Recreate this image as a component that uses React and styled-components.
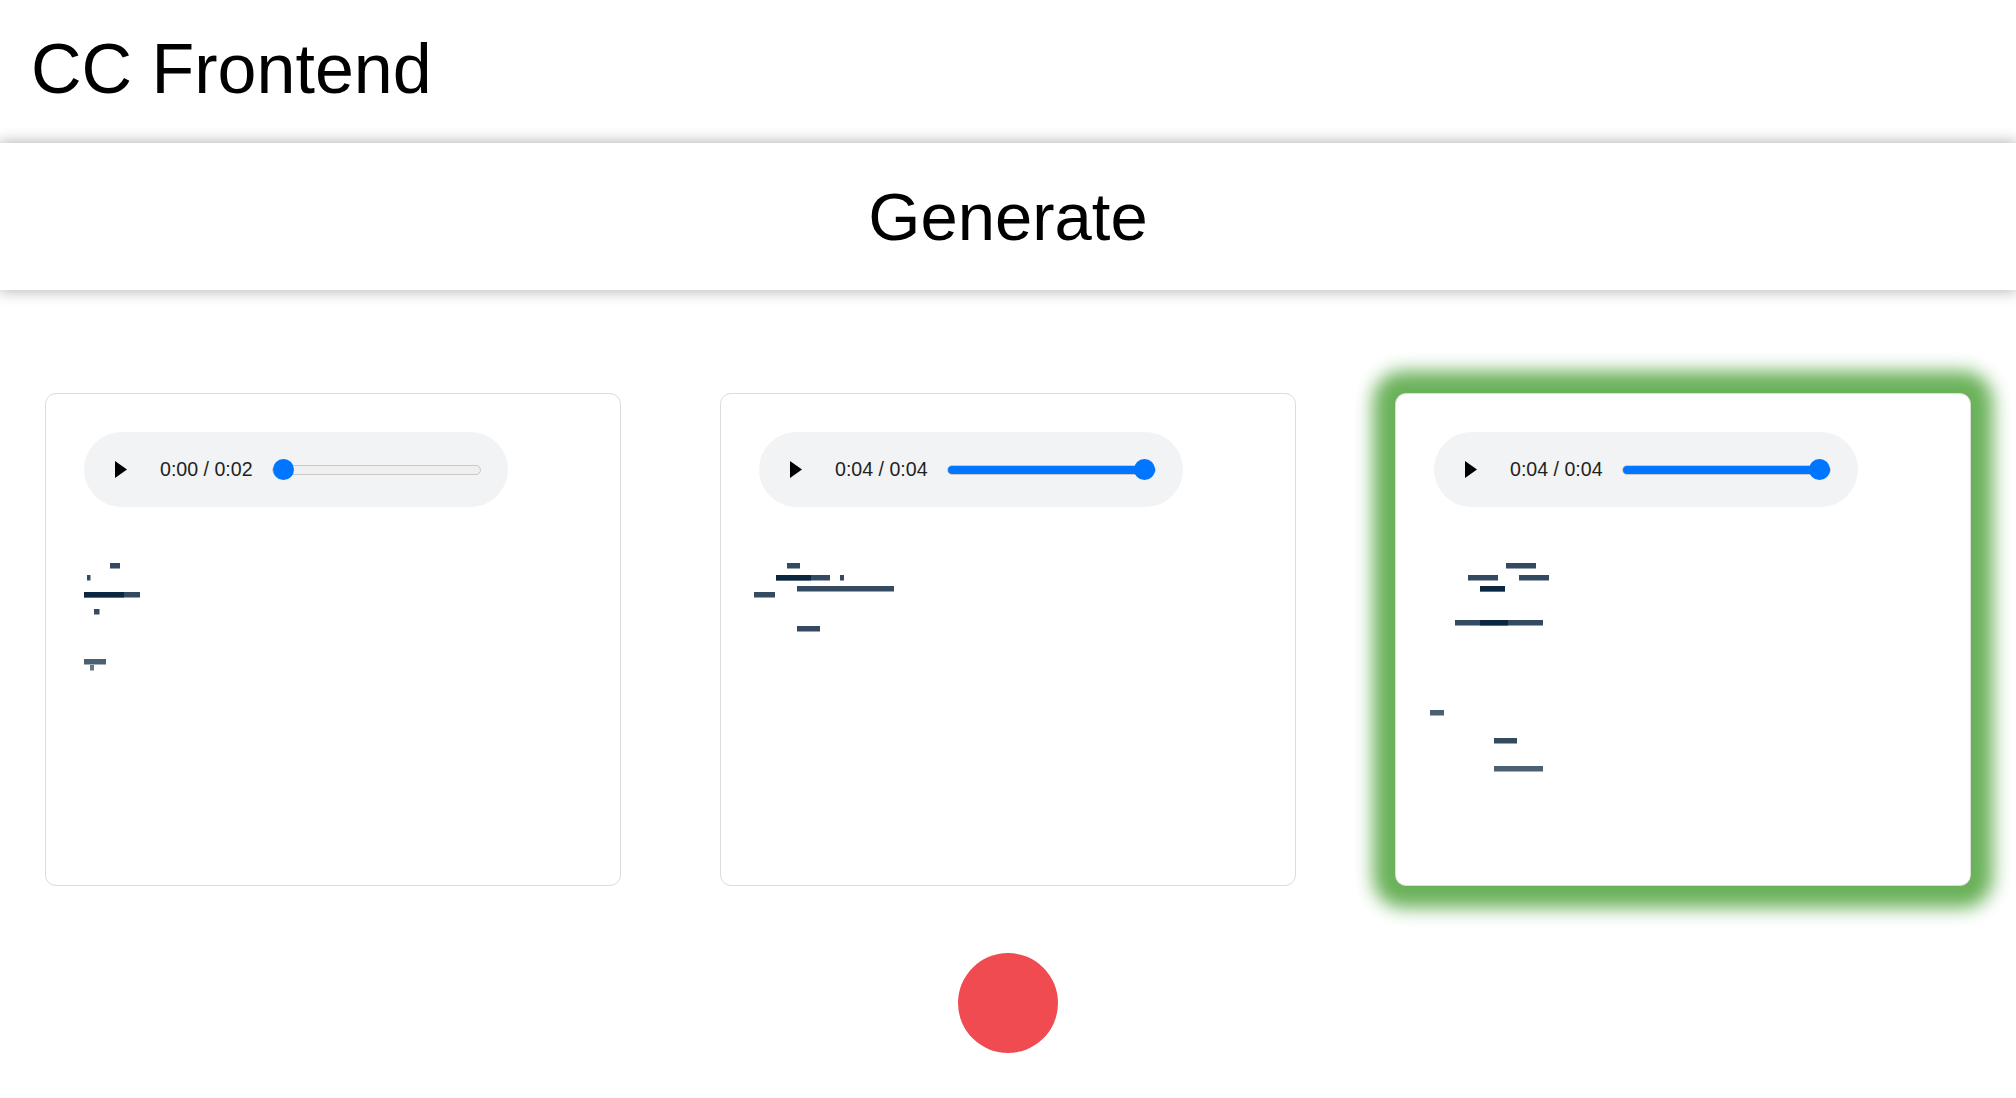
import styled, { createGlobalStyle } from "styled-components";

const GlobalStyle = createGlobalStyle`
  * {
    margin: 0;
    padding: 0;
    box-sizing: border-box;
  }
  body {
    background: #fff;
    font-family: "Liberation Sans", Arial, sans-serif;
    color: #000;
  }
`;

const Header = styled.header`
  height: 143px;
  padding: 29px 31px 0;
`;

const Titulo = styled.h1`
  font-size: 70px;
  font-weight: normal;
  line-height: normal;
`;

const GenerateBar = styled.div`
  height: 147px;
  display: flex;
  align-items: center;
  justify-content: center;
  background: #fff;
  font-size: 67px;
  box-shadow: 0 0 14px 1px rgba(0, 0, 0, 0.3);
  cursor: pointer;
`;

const Cards = styled.div`
  display: flex;
  justify-content: center;
  gap: 99px;
  padding: 103px 45px 0;
`;

const Card = styled.div`
  width: 576px;
  height: 493px;
  padding: 38px;
  background: #fff;
  border: 1px solid #dcdcdc;
  border-radius: 11px;
  box-shadow: ${(p) =>
    p.$selected ? "0 0 18px 22px rgb(106, 178, 90)" : "none"};
`;

const Player = styled.div`
  width: 424px;
  height: 75px;
  display: flex;
  align-items: center;
  padding: 0 27px 0 31px;
  background: #f1f3f4;
  border-radius: 38px;
`;

const Play = styled.svg`
  width: 12px;
  height: 17px;
  margin-right: 33px;
  flex-shrink: 0;
`;

const Tempo = styled.span`
  font-size: 19.6px;
  color: #1f1f1f;
  white-space: nowrap;
  margin-right: 19px;
`;

const Trilha = styled.div`
  position: relative;
  flex: 1;
  height: 10px;
  border-radius: 5px;
  background: #efefef;
  border: 1px solid #c9c9c9;
`;

const Preenchido = styled.div`
  height: 100%;
  width: ${(p) => p.$progress * 100}%;
  border-radius: 5px;
  background: #0075ff;
`;

const Bolinha = styled.div`
  position: absolute;
  top: 50%;
  left: ${(p) => `calc(${p.$progress * 100}% - ${p.$progress * 21}px)`};
  width: 21px;
  height: 21px;
  margin-top: -10.5px;
  border-radius: 50%;
  background: #0075ff;
`;

const Roll = styled.svg`
  display: block;
  margin-top: 13px;
  overflow: visible;
`;

const Footer = styled.div`
  display: flex;
  justify-content: center;
  padding-top: 67px;
`;

const Gravar = styled.button`
  width: 100px;
  height: 100px;
  border: none;
  border-radius: 50%;
  background: #ef4b51;
  cursor: pointer;
`;

const amostras = [
  {
    tempo: "0:00 / 0:02",
    progresso: 0,
    notas: [
      { x: 26, y: 43, w: 10 },
      { x: 3, y: 55, w: 3.5 },
      { x: 0, y: 72, w: 56 },
      { x: 0, y: 72, w: 40 },
      { x: 10, y: 89, w: 5.5 },
      { x: 0, y: 139, w: 22, o: 0.7 },
      { x: 6, y: 145, w: 4, o: 0.6 },
    ],
  },
  {
    tempo: "0:04 / 0:04",
    progresso: 1,
    notas: [
      { x: 28, y: 43, w: 13 },
      { x: 17, y: 55, w: 54 },
      { x: 17, y: 55, w: 35 },
      { x: 81, y: 55, w: 4 },
      { x: 38, y: 66, w: 97 },
      { x: -5, y: 72, w: 21 },
      { x: 38, y: 106, w: 23 },
    ],
  },
  {
    tempo: "0:04 / 0:04",
    progresso: 1,
    selecionado: true,
    notas: [
      { x: 72, y: 43, w: 30 },
      { x: 34, y: 55, w: 30 },
      { x: 85, y: 55, w: 30 },
      { x: 46, y: 66, w: 25 },
      { x: 46, y: 66, w: 25 },
      { x: 21, y: 100, w: 88 },
      { x: 46, y: 100, w: 28 },
      { x: -4, y: 190, w: 14, o: 0.7 },
      { x: 60, y: 218, w: 23 },
      { x: 60, y: 246, w: 49, o: 0.7 },
    ],
  },
];

const App = () => {
  return (
    <>
      <GlobalStyle />
      <Header>
        <Titulo>CC Frontend</Titulo>
      </Header>
      <GenerateBar>Generate</GenerateBar>
      <Cards>
        {amostras.map((a, i) => (
          <Card key={i} $selected={a.selecionado}>
            <Player>
              <Play viewBox="0 0 12 17">
                <path d="M0 0 L12 8.5 L0 17 Z" fill="#000" />
              </Play>
              <Tempo>{a.tempo}</Tempo>
              <Trilha>
                <Preenchido $progress={a.progresso} />
                <Bolinha $progress={a.progresso} />
              </Trilha>
            </Player>
            <Roll width="498" height="270" viewBox="0 0 498 270">
              {a.notas.map((n, j) => (
                <rect
                  key={j}
                  x={n.x}
                  y={n.y}
                  width={n.w}
                  height="5.5"
                  fill="rgb(0, 29, 56)"
                  fillOpacity={n.o || 0.8}
                />
              ))}
            </Roll>
          </Card>
        ))}
      </Cards>
      <Footer>
        <Gravar aria-label="Gravar" />
      </Footer>
    </>
  );
};
export default App;
